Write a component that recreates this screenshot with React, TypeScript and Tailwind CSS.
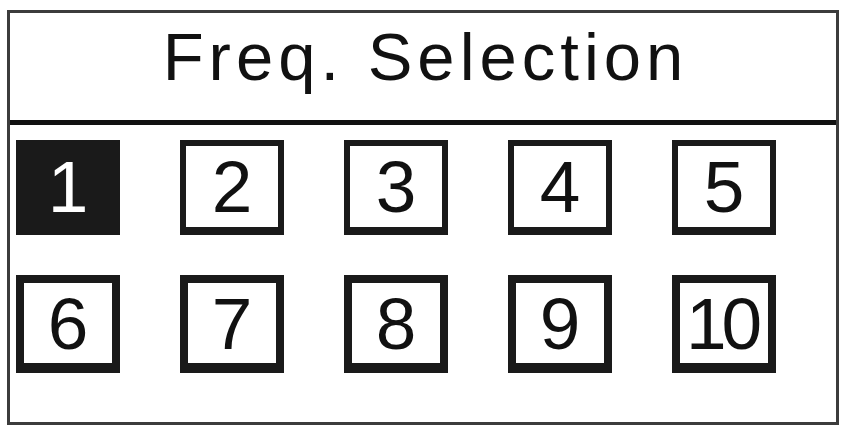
import React from "react";

const font = { fontFamily: '"Liberation Sans", Arial, sans-serif' };

function Cell({ label, active, heavy }: { label: string; active?: boolean; heavy?: boolean }) {
  const frame = heavy
    ? "h-[98px] border-[8px] border-b-[10px]"
    : "h-[95px] border-[6px] border-b-[8px]";
  const tone = active
    ? "bg-[#1a1a1a] border-[#1a1a1a] text-white"
    : "bg-white border-[#1a1a1a] text-[#111]";
  const spacing = label.length > 1 ? "tracking-[-5px] pr-[5px]" : "";
  return (
    <div className={`w-[104px] ${frame} ${tone} flex items-center justify-center`}>
      <span className={`text-[73px] leading-none ${spacing}`} style={font}>
        {label}
      </span>
    </div>
  );
}

export default function App() {
  const top = ["1", "2", "3", "4", "5"];
  const bottom = ["6", "7", "8", "9", "10"];
  return (
    <div className="w-[843px] h-[426px] bg-white overflow-hidden">
      <div className="ml-[7px] mt-[10px] w-[832px] h-[415px] border-[3px] border-[#3c3c3c] flex flex-col">
        <div className="h-[112px] border-b-[5px] border-[#111] flex justify-center pt-[10px] shrink-0">
          <span
            className="text-[67px] leading-none tracking-[5px] pl-[5px] text-[#111]"
            style={font}
          >
            Freq. Selection
          </span>
        </div>
        <div className="flex flex-col gap-[40px] pt-[15px] pl-[6px]">
          <div className="flex gap-[60px]">
            {top.map((n, i) => (
              <Cell key={n} label={n} active={i === 0} />
            ))}
          </div>
          <div className="flex gap-[60px]">
            {bottom.map((n) => (
              <Cell key={n} label={n} heavy />
            ))}
          </div>
        </div>
      </div>
    </div>
  );
}
